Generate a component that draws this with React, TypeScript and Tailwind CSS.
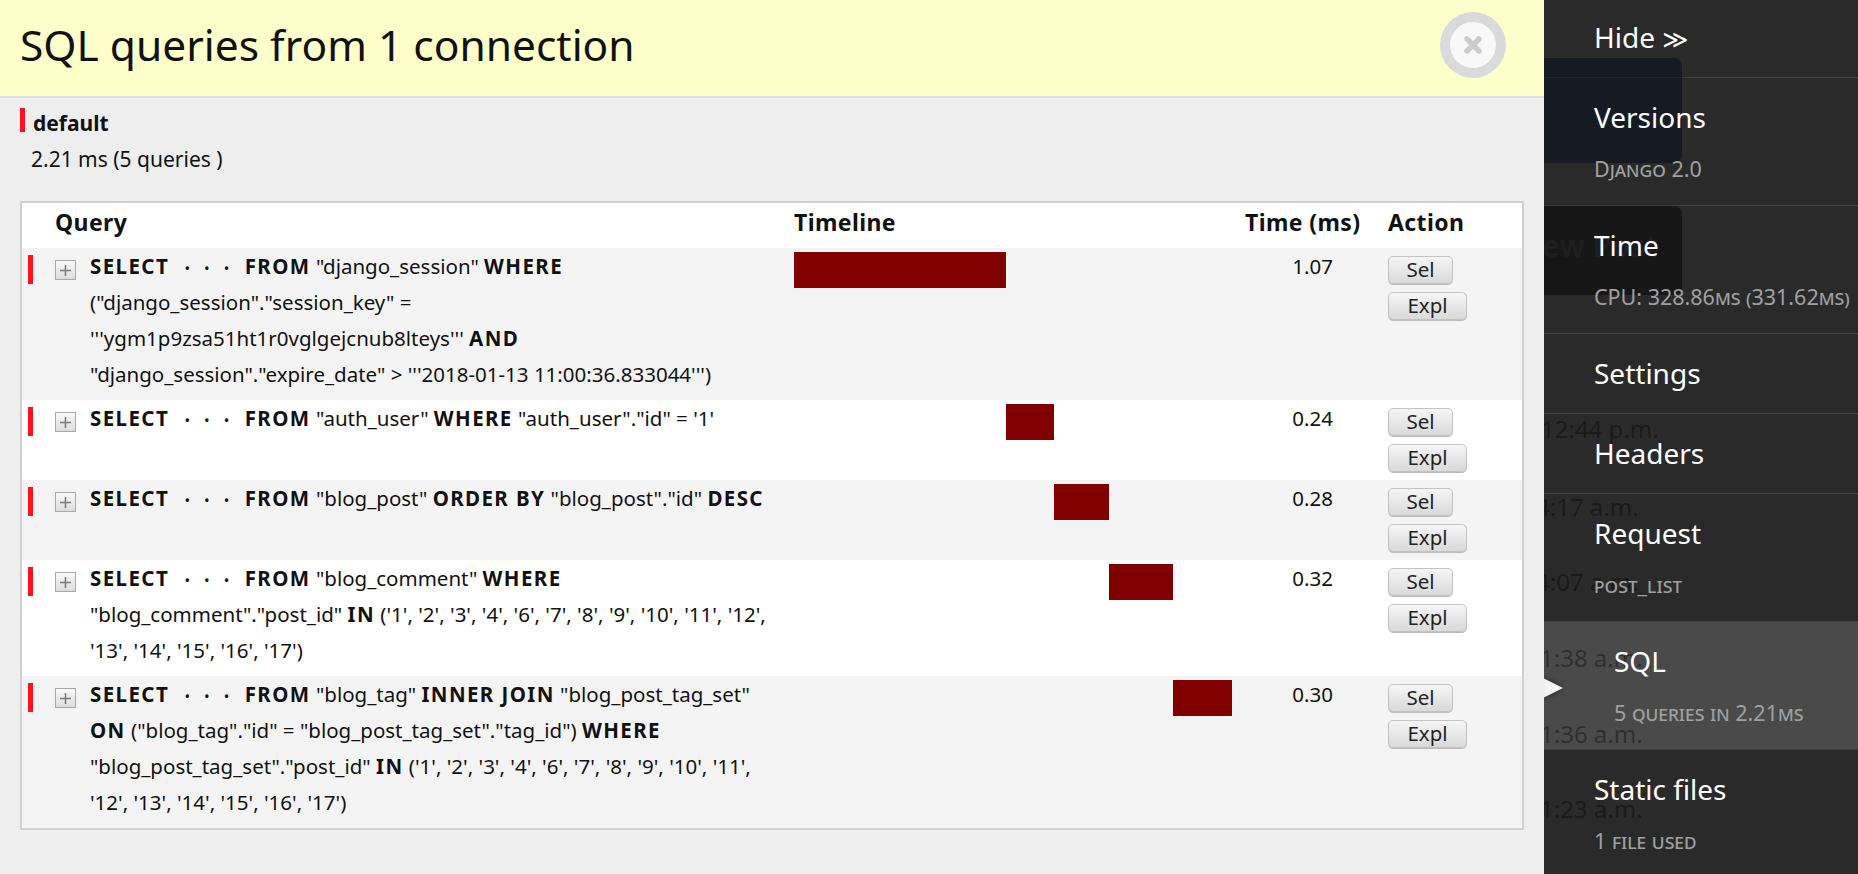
import React from "react";

type Query = {
  lines: string[];
  time: number;
};

// lines use **...** for sql keywords and ~ for the collapsed column list
const queries: Query[] = [
  {
    lines: [
      '**SELECT** ~ **FROM** "django_session" **WHERE**',
      '("django_session"."session_key" =',
      "'''ygm1p9zsa51ht1r0vglgejcnub8lteys''' **AND**",
      "\"django_session\".\"expire_date\" > '''2018-01-13 11:00:36.833044''')",
    ],
    time: 1.07,
  },
  {
    lines: ['**SELECT** ~ **FROM** "auth_user" **WHERE** "auth_user"."id" = \'1\''],
    time: 0.24,
  },
  {
    lines: ['**SELECT** ~ **FROM** "blog_post" **ORDER BY** "blog_post"."id" **DESC**'],
    time: 0.28,
  },
  {
    lines: [
      '**SELECT** ~ **FROM** "blog_comment" **WHERE**',
      "\"blog_comment\".\"post_id\" **IN** ('1', '2', '3', '4', '6', '7', '8', '9', '10', '11', '12',",
      "'13', '14', '15', '16', '17')",
    ],
    time: 0.32,
  },
  {
    lines: [
      '**SELECT** ~ **FROM** "blog_tag" **INNER JOIN** "blog_post_tag_set"',
      '**ON** ("blog_tag"."id" = "blog_post_tag_set"."tag_id") **WHERE**',
      "\"blog_post_tag_set\".\"post_id\" **IN** ('1', '2', '3', '4', '6', '7', '8', '9', '10', '11',",
      "'12', '13', '14', '15', '16', '17')",
    ],
    time: 0.3,
  },
];

const total = queries.reduce((s, q) => s + q.time, 0);

function Dots() {
  return (
    <span className="inline-flex gap-[14px] px-[10px] text-[15px] leading-none">
      <span>•</span>
      <span>•</span>
      <span>•</span>
    </span>
  );
}

function SqlLine({ line }: { line: string }) {
  const parts = line.split(/(\*\*[^*]+\*\*|~)/g).filter((p) => p !== "");
  return (
    <div className="h-[36px] whitespace-pre">
      {parts.map((p, i) => {
        if (p === "~") return <Dots key={i} />;
        if (p.startsWith("**")) {
          return (
            <span key={i} className="font-bold tracking-[1.4px]">
              {p.slice(2, -2)}
            </span>
          );
        }
        return <span key={i}>{p}</span>;
      })}
    </div>
  );
}

function ToggleBox() {
  return (
    <div className="mt-[12px] flex h-[20px] w-[21px] shrink-0 items-center justify-center border border-[#a8a8a8] bg-gradient-to-b from-[#fafafa] to-[#dcdcdc]">
      <svg width="13" height="13" viewBox="0 0 13 13">
        <path d="M6.5 1v11M1 6.5h11" stroke="#7a7a7a" strokeWidth="1.5" />
      </svg>
    </div>
  );
}

function ActionButton({ label, width }: { label: string; width: string }) {
  return (
    <button
      className={`flex h-[28px] items-start justify-center rounded-[5px] border border-[#c2c2c2] bg-gradient-to-b from-[#f6f6f6] to-[#d9d9d9] text-[20.5px] leading-[25px] text-[#222] shadow-[0_1px_0_#bbb] ${width}`}
    >
      {label}
    </button>
  );
}

function QueryRow({ q, index, offset }: { q: Query; index: number; offset: number }) {
  return (
    <div className={`flex ${index % 2 === 0 ? "bg-[#f4f4f4]" : "bg-white"}`}>
      <div className="flex w-[772px] shrink-0 items-start">
        <div className="ml-[6px] mt-[7px] h-[29px] w-[5px] shrink-0 bg-[#ff1020]" />
        <div className="ml-[22px]">
          <ToggleBox />
        </div>
        <div className="ml-[14px] pb-[8px] text-[20.5px] leading-[36px] text-[#111]">
          {q.lines.map((l, i) => (
            <SqlLine key={i} line={l} />
          ))}
        </div>
      </div>
      <div className="w-[438px] shrink-0">
        <div
          className="mt-[4px] h-[36px] bg-[#800000]"
          style={{ marginLeft: `${(offset / total) * 100}%`, width: `${(q.time / total) * 100}%` }}
        />
      </div>
      <div className="w-[156px] shrink-0 pr-[55px] text-right text-[20.5px] leading-[36px] text-[#111]">
        {q.time.toFixed(2)}
      </div>
      <div className="flex flex-1 flex-col gap-[8px] py-[8px]">
        <ActionButton label="Sel" width="w-[65px]" />
        <ActionButton label="Expl" width="w-[79px]" />
      </div>
    </div>
  );
}

function CloseButton() {
  return (
    <div className="-mt-[4px] flex h-[66px] w-[66px] items-center justify-center rounded-full bg-[#dadada] blur-[0.4px]">
      <div className="flex h-[46px] w-[46px] items-center justify-center rounded-full bg-[#f8f8f8]">
        <svg width="20" height="20" viewBox="0 0 20 20">
          <path d="M4 4l12 12M16 4L4 16" stroke="#cccccc" strokeWidth="5.5" strokeLinecap="round" />
        </svg>
      </div>
    </div>
  );
}

type NavItem = { title: string; sub?: string; active?: boolean };

const navItems: NavItem[] = [
  { title: "Versions", sub: "Django 2.0" },
  { title: "Time", sub: "CPU: 328.86ms (331.62ms)" },
  { title: "Settings" },
  { title: "Headers" },
  { title: "Request", sub: "post_list" },
  { title: "SQL", sub: "5 queries in 2.21ms", active: true },
  { title: "Static files", sub: "1 file used" },
];

// page content that shows through the toolbar
const ghostTimes = [
  { text: "12:44 p.m.", top: "top-[412px]", left: "-left-[3px]" },
  { text: "4:17 a.m.", top: "top-[490px]", left: "-left-[8px]" },
  { text: "4:07 a.m.", top: "top-[565px]", left: "-left-[8px]" },
  { text: "1:38 a.m.", top: "top-[641px]", left: "-left-[4px]" },
  { text: "1:36 a.m.", top: "top-[717px]", left: "-left-[4px]" },
  { text: "1:23 a.m.", top: "top-[792px]", left: "-left-[4px]" },
];

function Sidebar() {
  return (
    <div className="relative flex-1 overflow-hidden bg-[#2a2a2a] text-white">
      <div className="pointer-events-none absolute inset-0 z-10">
        <div className="absolute left-0 top-[58px] h-[105px] w-[138px] rounded-r-[8px] bg-[rgba(5,15,30,0.55)]" />
        <div className="absolute left-0 top-[206px] h-[89px] w-[138px] rounded-r-[8px] bg-[rgba(0,0,0,0.45)]">
          <div className="-ml-[2px] mt-[20px] text-[30px] font-bold leading-[40px] text-[rgba(255,255,255,0.04)]">
            ew Post
          </div>
        </div>
        {ghostTimes.map((g) => (
          <div
            key={g.text}
            className={`absolute whitespace-nowrap text-[24px] leading-[33px] text-[rgba(0,0,0,0.38)] ${g.top} ${g.left}`}
          >
            {g.text}
          </div>
        ))}
      </div>

      <div className="border-b border-[#3e3e3e] pb-[18px] pl-[50px] pt-[18px]">
        <div className="relative z-20 text-[28px] leading-[38px]">
          Hide <span className="font-['DejaVu_Sans'] text-[25px]">≫</span>
        </div>
      </div>
      {navItems.map((item) => (
        <div
          key={item.title}
          className={`relative border-b border-[#3e3e3e] pb-[21px] pt-[20px] ${
            item.active ? "bg-[#4a4a4a] pl-[70px]" : "pl-[50px]"
          }`}
        >
          {item.active && (
            <svg
              className="absolute -left-[1px] top-[54px] z-20 drop-shadow-[0_0_3px_rgba(0,0,0,0.5)]"
              width="22"
              height="24"
              viewBox="0 0 22 24"
            >
              <polygon points="0,2 20,12 0,22" fill="#f4f4f4" />
            </svg>
          )}
          <div className="relative z-20 text-[28px] leading-[38px] text-white">{item.title}</div>
          {item.sub && (
            <div className="relative z-20 mt-[18px] text-[21.5px] leading-[30px] text-[#a0a0a0] [font-variant:small-caps]">
              {item.sub}
            </div>
          )}
        </div>
      ))}
    </div>
  );
}

export default function App() {
  let acc = 0;
  const offsets = queries.map((q) => {
    const o = acc;
    acc += q.time;
    return o;
  });

  return (
    <div className="flex h-[874px] w-full overflow-hidden font-['Noto_Sans','Open_Sans',sans-serif]">
      <div className="flex w-[1544px] shrink-0 flex-col bg-[#eeeeee] text-[#111]">
        <div className="flex h-[98px] items-start justify-between border-b-2 border-[#dddddd] bg-[#ffffcc] pl-[20px] pr-[38px] pt-[16px]">
          <h1 className="text-[42.5px] leading-[58px] text-[#111]">SQL queries from 1 connection</h1>
          <CloseButton />
        </div>

        <div className="px-[20px]">
          <div className="mt-[10px] flex items-start">
            <div className="h-[24px] w-[5px] bg-[#ff1020]" />
            <div className="ml-[8px] mt-[2px] text-[21px] font-bold leading-[27px]">default</div>
          </div>
          <div className="mt-[9px] pl-[11px] text-[21px] leading-[27px]">2.21 ms (5 queries )</div>

          <div className="mt-[28px] border-2 border-[#d0d0d0] bg-white">
            <div className="flex h-[45px] pt-[4px] text-[23px] font-bold leading-[31px] tracking-[0.4px]">
              <div className="w-[772px] shrink-0 pl-[33px]">Query</div>
              <div className="w-[438px] shrink-0">Timeline</div>
              <div className="w-[156px] shrink-0 pl-[13px]">Time (ms)</div>
              <div className="flex-1">Action</div>
            </div>
            {queries.map((q, i) => (
              <QueryRow key={i} q={q} index={i} offset={offsets[i]} />
            ))}
          </div>
        </div>
      </div>
      <Sidebar />
    </div>
  );
}
